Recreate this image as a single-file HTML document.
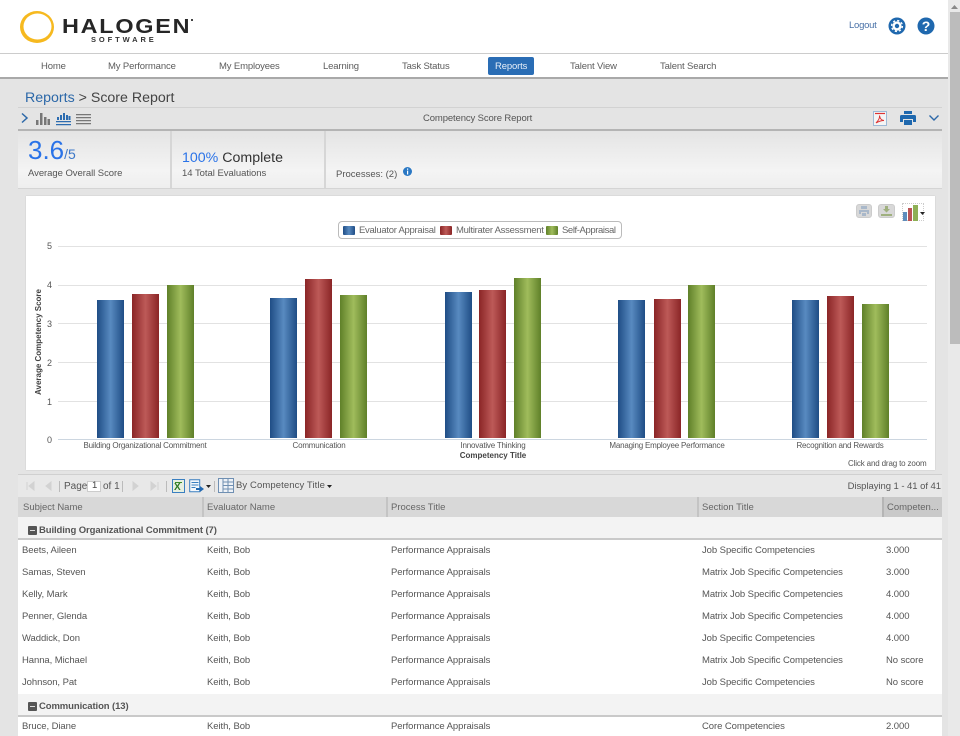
<!DOCTYPE html>
<html><head><meta charset="utf-8"><title>Score Report</title>
<style>
html,body{margin:0;padding:0;width:960px;height:736px;overflow:hidden;background:#e4e4e4}
body{font-family:"Liberation Sans",sans-serif;font-size:9.5px;color:#555;position:relative}
#w{position:absolute;left:0;top:0;width:960px;height:736px;overflow:hidden;filter:blur(.35px)}
.a,.t{position:absolute}
.t{white-space:nowrap;line-height:12px}
.bar{position:absolute;width:27px;box-sizing:border-box}
.b{background:linear-gradient(90deg,#1f4d85,#588ac0 50%,#1f4d85)}
.r{background:linear-gradient(90deg,#8a2526,#bd5a58 50%,#8a2526)}
.g{background:linear-gradient(90deg,#5f8029,#a0bc5c 50%,#5f8029)}
.gl{position:absolute;left:58px;width:869px;height:1px;background:#e2e2e2}
.n{color:#5c5c5c;font-size:9.5px;top:61px;letter-spacing:-.14px}
.h{top:502px;font-size:9.5px;color:#666;letter-spacing:0}
.c{font-size:9.5px;color:#555;letter-spacing:-.07px}
.yl{left:47px;font-size:9px;color:#555}
.xl{font-size:8px;color:#555;top:440px;text-align:center;letter-spacing:-.2px}
.row{position:absolute;left:18px;width:924px;height:22px;background:#fff}
.grp{position:absolute;left:18px;width:924px;height:21px;background:#f3f3f3;border-bottom:2px solid #c9c9c9}
.mn{position:absolute;left:28px;width:9px;height:9px;background:#555;border-radius:1px}
.mn:after{content:"";position:absolute;left:2px;top:4px;width:5px;height:1px;background:#ddd}
.gt{left:39px;font-size:9.5px;font-weight:bold;color:#555;letter-spacing:-.1px}
.sep{position:absolute;width:1px;background:#bbb}
.lg{top:225px;font-size:9.5px;color:#666;letter-spacing:-.28px}
</style></head><body><div id="w">
<div class="a" style="left:0;top:0;width:948px;height:53px;background:#fff"></div>
<div class="a" style="left:0;top:53px;width:948px;height:1px;background:#ccc"></div>
<div class="a" style="left:0;top:54px;width:948px;height:23px;background:#fff"></div>
<div class="a" style="left:0;top:77px;width:948px;height:2px;background:#a9a9a9"></div>

<svg class="a" style="left:18px;top:8px" width="40" height="38" viewBox="0 0 40 38"><path fill-rule="evenodd" fill="#f6b91f" d="M2 19a17 16 0 1 0 34 0a17 16 0 1 0-34 0zM5.500 18.500a14 13 0 1 1 28 0a14 13 0 1 1-28 0z"/></svg>
<div class="t" style="left:62px;top:15px;font-size:20px;line-height:24px;font-weight:bold;color:#262626;letter-spacing:1.5px;transform:scaleX(1.17);transform-origin:0 0">HALOGEN</div>
<div class="a" style="left:191px;top:19px;width:2px;height:2px;background:#444"></div>
<div class="t" style="left:91px;top:35px;font-size:7.5px;line-height:9px;font-weight:bold;color:#333;letter-spacing:2.9px">SOFTWARE</div>

<div class="t" style="left:849px;top:20px;color:#4a72a8;font-size:9.5px;letter-spacing:-.25px">Logout</div>
<svg class="a" style="left:888px;top:17px" width="18" height="18" viewBox="0 0 18 18"><circle cx="9" cy="9" r="8.5" fill="#1f68ae"/><circle cx="9" cy="9" r="4.600" fill="#fff"/><circle cx="9" cy="9" r="5.400" fill="none" stroke="#fff" stroke-width="1.400" stroke-dasharray="2.200 2.040"/><circle cx="9" cy="9" r="2.200" fill="#1f68ae"/></svg>
<svg class="a" style="left:917px;top:17px" width="18" height="18" viewBox="0 0 18 18"><circle cx="9" cy="9" r="8.5" fill="#1f68ae"/><text x="9" y="14" text-anchor="middle" font-family="Liberation Sans" font-size="14" font-weight="bold" fill="#fff">?</text></svg>

<div class="t n" style="left:41px">Home</div>
<div class="t n" style="left:108px">My Performance</div>
<div class="t n" style="left:219px">My Employees</div>
<div class="t n" style="left:323px">Learning</div>
<div class="t n" style="left:402px">Task Status</div>
<div class="a" style="left:488px;top:57px;width:46px;height:18px;background:#2a6db5;border-radius:2px"></div>
<div class="t n" style="left:495px;color:#e6eef8">Reports</div>
<div class="t n" style="left:570px">Talent View</div>
<div class="t n" style="left:660px">Talent Search</div>

<div class="t" style="left:25px;top:89px;font-size:14.2px;line-height:18px;color:#444"><span style="color:#2c68a8">Reports</span> &gt; Score Report</div>

<div class="a" style="left:18px;top:107px;width:924px;height:1px;background:#d2d2d2"></div>
<div class="a" style="left:18px;top:108px;width:924px;height:21px;background:#e4e4e4"></div>
<div class="a" style="left:18px;top:129px;width:924px;height:2px;background:#b4b4b4"></div>
<svg class="a" style="left:20px;top:112px" width="10" height="12" viewBox="0 0 10 12"><path d="M2 1.5 L7 6 L2 10.5" fill="none" stroke="#2c68a8" stroke-width="1.5"/></svg>
<svg class="a" style="left:36px;top:112px" width="15" height="14" viewBox="0 0 15 14"><path d="M0 13V8h2.5v5zM4 13V1h2.5v12zM8 13V5h2.5v8zM11.5 13V7H14v6z" fill="#777"/></svg>
<svg class="a" style="left:56px;top:112px" width="15" height="14" viewBox="0 0 15 14"><path d="M1 8V5h2v3zM4 8V3h2v5zM7 8V1h2v7zM10 8V3h2v5zM12.5 8V4h2v4zM0 9h15v1.2H0zM0 12h15v1.2H0z" fill="#2c6cb0"/></svg>
<svg class="a" style="left:76px;top:113px" width="15" height="13" viewBox="0 0 15 13"><path d="M0 1h15v1.2H0zM0 4h15v1.2H0zM0 7h15v1.2H0zM0 10h15v1.2H0z" fill="#777"/></svg>
<div class="t" style="left:423px;top:113px;font-size:9.5px;color:#555;letter-spacing:-.12px">Competency Score Report</div>
<div class="a" style="left:873px;top:111px;width:12px;height:13px;border:1px solid #9db9d6;background:#f4f4f4"></div>
<svg class="a" style="left:874px;top:112px" width="12" height="13" viewBox="0 0 12 13"><path d="M1 1.5h10" stroke="#d33" stroke-width="1.2"/><path d="M2 11 C5 8 6 6 5.5 3.5 C6 7 8 8.5 10 8.5 C7.5 8.5 4.5 9.5 2 11Z" fill="none" stroke="#d33" stroke-width="1"/></svg>
<svg class="a" style="left:900px;top:111px" width="16" height="14" viewBox="0 0 16 14"><path d="M4 0h8v3H4zM1.5 4h13a1.5 1.5 0 0 1 1.5 1.5V11h-3V8H3v3H0V5.500A1.500 1.500 0 0 1 1.500 4zM4 9h8v5H4z" fill="#1f68ae"/></svg>
<svg class="a" style="left:928px;top:114px" width="12" height="8" viewBox="0 0 12 8"><path d="M1.500 1.500L6 6l4.500-4.500" fill="none" stroke="#2c68a8" stroke-width="1.400"/></svg>

<div class="a" style="left:18px;top:131px;width:924px;height:57px;background:linear-gradient(#e4e4e4,#f4f4f4 70%,#eee);border-bottom:1px solid #d4d4d4"></div>
<div class="a" style="left:170px;top:131px;width:2px;height:57px;background:#d6d6d6"></div>
<div class="a" style="left:324px;top:131px;width:2px;height:57px;background:#d6d6d6"></div>
<div class="t" style="left:28px;top:135px;font-size:26px;line-height:30px;color:#2a73e8">3.6<span style="font-size:14px;color:#3d78c8">/5</span></div>
<div class="t" style="left:28px;top:168px;font-size:9.5px;color:#555;letter-spacing:-.05px">Average Overall Score</div>
<div class="t" style="left:182px;top:150px;font-size:14.2px;line-height:17px;color:#333"><span style="color:#2a73e8">100%</span> Complete</div>
<div class="t" style="left:182px;top:168px;font-size:9.5px;color:#555;letter-spacing:-.03px">14 Total Evaluations</div>
<div class="t" style="left:336px;top:169px;font-size:9.5px;color:#555">Processes: (2)</div>
<svg class="a" style="left:403px;top:167px" width="9" height="9" viewBox="0 0 9 9"><circle cx="4.500" cy="4.500" r="4.500" fill="#2a78c4"/><path d="M4 1.500h1.200v1.200H4zM4 3.600h1.200V7.500H4z" fill="#fff"/></svg>

<div class="a" style="left:26px;top:196px;width:909px;height:274px;background:#fff;box-shadow:0 0 1px #bbb"></div>
<div class="a" style="left:856px;top:204px;width:16px;height:14px;background:#d8d8d8;border:1px solid #ccc;border-radius:3px;box-sizing:border-box"></div>
<svg class="a" style="left:858px;top:205px" width="12" height="12" viewBox="0 0 12 12"><path d="M3 1h6v3H3zM1 5h10v4H9V7H3v2H1zM4 8h4v3H4z" fill="#a9b8ca"/></svg>
<div class="a" style="left:878px;top:204px;width:17px;height:14px;background:#d8d8d8;border:1px solid #ccc;border-radius:3px;box-sizing:border-box"></div>
<svg class="a" style="left:880px;top:205px" width="13" height="12" viewBox="0 0 13 12"><path d="M5 1h3v3h2L6.500 7.500 3 4h2zM1 9h11v2H1z" fill="#9fb07e"/></svg>
<div class="a" style="left:902px;top:203px;width:22px;height:18px;border:1px dotted #ccc;box-sizing:border-box"></div>
<div class="a" style="left:903px;top:212px;width:4px;height:9px;background:#5e8dbc"></div>
<div class="a" style="left:908px;top:208px;width:4px;height:13px;background:#bb5455"></div>
<div class="a" style="left:913px;top:205px;width:5px;height:16px;background:#8eaf55"></div>
<svg class="a" style="left:920px;top:212px" width="5" height="3"><path d="M0 0h5L2.500 3z" fill="#222"/></svg>

<div class="a" style="left:338px;top:221px;width:284px;height:18px;border:1px solid #bbb;border-radius:4px;box-sizing:border-box;background:#fff"></div>
<div class="a b" style="left:343px;top:226px;width:12px;height:9px;border-radius:1px"></div>
<div class="t lg" style="left:359px">Evaluator Appraisal</div>
<div class="a r" style="left:440px;top:226px;width:12px;height:9px;border-radius:1px"></div>
<div class="t lg" style="left:456px">Multirater Assessment</div>
<div class="a g" style="left:546px;top:226px;width:12px;height:9px;border-radius:1px"></div>
<div class="t lg" style="left:562px;letter-spacing:-.4px">Self-Appraisal</div>

<div class="gl" style="top:246px"></div><div class="gl" style="top:285px"></div><div class="gl" style="top:323px"></div><div class="gl" style="top:362px"></div><div class="gl" style="top:401px"></div><div class="gl" style="top:439px;background:#ccd6e0"></div>
<div class="t yl" style="top:240px">5</div><div class="t yl" style="top:279px">4</div><div class="t yl" style="top:318px">3</div><div class="t yl" style="top:357px">2</div><div class="t yl" style="top:396px">1</div><div class="t yl" style="top:434px">0</div>
<div class="t" style="left:-21px;top:336px;width:120px;text-align:center;font-size:8px;font-weight:bold;color:#444;transform:rotate(-90deg)">Average Competency Score</div>

<div class="bar b" style="left:97px;top:300px;height:138px"></div><div class="bar r" style="left:132px;top:294px;height:144px"></div><div class="bar g" style="left:167px;top:285px;height:153px"></div>
<div class="bar b" style="left:270px;top:298px;height:140px"></div><div class="bar r" style="left:305px;top:279px;height:159px"></div><div class="bar g" style="left:340px;top:295px;height:143px"></div>
<div class="bar b" style="left:445px;top:292px;height:146px"></div><div class="bar r" style="left:479px;top:290px;height:148px"></div><div class="bar g" style="left:514px;top:278px;height:160px"></div>
<div class="bar b" style="left:618px;top:300px;height:138px"></div><div class="bar r" style="left:654px;top:299px;height:139px"></div><div class="bar g" style="left:688px;top:285px;height:153px"></div>
<div class="bar b" style="left:792px;top:300px;height:138px"></div><div class="bar r" style="left:827px;top:296px;height:142px"></div><div class="bar g" style="left:862px;top:304px;height:134px"></div>

<div class="t xl" style="left:58px;width:174px">Building Organizational Commitment</div>
<div class="t xl" style="left:232px;width:174px">Communication</div>
<div class="t xl" style="left:406px;width:174px">Innovative Thinking</div>
<div class="t xl" style="left:580px;width:174px">Managing Employee Performance</div>
<div class="t xl" style="left:753px;width:174px">Recognition and Rewards</div>
<div class="t" style="left:406px;top:450px;width:174px;text-align:center;font-size:8px;font-weight:bold;color:#444">Competency Title</div>
<div class="t" style="left:848px;top:458px;font-size:8px;color:#555;letter-spacing:-.15px">Click and drag to zoom</div>

<div class="a" style="left:18px;top:474px;width:924px;height:23px;background:#e8e8e8;border-top:1px solid #d0d0d0;box-sizing:border-box"></div>
<svg class="a" style="left:26px;top:481px" width="34" height="10" viewBox="0 0 34 10"><path d="M1 1v8M8 1L3 5l5 4zM25 1l-5 4 5 4z" fill="#d2d2d2" stroke="#d2d2d2"/></svg>
<div class="sep" style="left:59px;top:481px;height:11px"></div>
<div class="t" style="left:64px;top:481px;font-size:10px;color:#555">Page</div>
<div class="a" style="left:87px;top:481px;width:14px;height:11px;background:#fff;border:1px solid #ccc;box-sizing:border-box"></div>
<div class="t" style="left:92px;top:480px;font-size:9.500px;color:#444">1</div>
<div class="t" style="left:103px;top:481px;font-size:10px;color:#555">of 1</div>
<div class="sep" style="left:122px;top:481px;height:11px"></div>
<svg class="a" style="left:131px;top:481px" width="28" height="10" viewBox="0 0 28 10"><path d="M2 1l5 4-5 4zM20 1l5 4-5 4zM27 1v8" fill="#d2d2d2" stroke="#d2d2d2"/></svg>
<div class="sep" style="left:166px;top:481px;height:11px"></div>
<div class="a" style="left:172px;top:479px;width:13px;height:14px;background:#e6efe0;border:1px solid #3a7fc0;box-sizing:border-box"></div>
<div class="a" style="left:175px;top:482px;width:7px;height:1px;background:#3a8a2a"></div>
<div class="t" style="left:174px;top:482px;font-size:10px;font-weight:bold;color:#2d7a22">X</div>
<svg class="a" style="left:189px;top:479px" width="16" height="14" viewBox="0 0 16 14"><path d="M.7.700h10v12H.7z" fill="#f4f7fb" stroke="#3a7fc0"/><path d="M2.500 3.500h7M2.500 6h7M2.500 8.500h4" stroke="#3a7fc0"/><path d="M7 9h4V7l4 3-4 3v-2H7z" fill="#2268b0"/></svg>
<svg class="a" style="left:206px;top:485px" width="5" height="3"><path d="M0 0h5L2.500 3z" fill="#222"/></svg>
<div class="sep" style="left:214px;top:481px;height:11px"></div>
<svg class="a" style="left:218px;top:478px" width="16" height="15" viewBox="0 0 16 15"><path d="M.5.500h15v14H.5z" fill="#eef2f7" stroke="#6f8fb2"/><path d="M5 .500v14M10 .500v14M5 4h10M5 7.500h10M5 11h10" stroke="#6f8fb2" fill="none"/></svg>
<div class="t" style="left:236px;top:480px;font-size:9.5px;color:#555;letter-spacing:.1px">By Competency Title</div>
<svg class="a" style="left:327px;top:485px" width="5" height="3"><path d="M0 0h5L2.500 3z" fill="#222"/></svg>
<div class="t" style="right:19px;top:481px;font-size:9.5px;color:#555;letter-spacing:-.05px">Displaying 1 - 41 of 41</div>

<div class="a" style="left:18px;top:497px;width:924px;height:20px;background:#d8d8d8"></div>
<div class="a" style="left:883px;top:497px;width:59px;height:20px;background:#c9c9c9"></div>
<div class="sep" style="left:202px;top:497px;height:20px;width:2px;background:#c4c4c4"></div>
<div class="sep" style="left:386px;top:497px;height:20px;width:2px;background:#c4c4c4"></div>
<div class="sep" style="left:697px;top:497px;height:20px;width:2px;background:#c4c4c4"></div>
<div class="sep" style="left:882px;top:497px;height:20px;width:2px;background:#b5b5b5"></div>
<div class="t h" style="left:23px">Subject Name</div><div class="t h" style="left:207px">Evaluator Name</div><div class="t h" style="left:391px">Process Title</div><div class="t h" style="left:702px">Section Title</div><div class="t h" style="left:887px">Competen...</div>

<div class="grp" style="top:517px"></div><div class="mn" style="top:526px"></div><div class="t gt" style="top:525px">Building Organizational Commitment (7)</div>
<div class="row" style="top:540px;height:154px"></div>

<div class="t c" style="left:22px;top:545px">Beets, Aileen</div><div class="t c" style="left:207px;top:545px">Keith, Bob</div><div class="t c" style="left:391px;top:545px">Performance Appraisals</div><div class="t c" style="left:702px;top:545px">Job Specific Competencies</div><div class="t c" style="left:886px;top:545px">3.000</div>
<div class="t c" style="left:22px;top:567px">Samas, Steven</div><div class="t c" style="left:207px;top:567px">Keith, Bob</div><div class="t c" style="left:391px;top:567px">Performance Appraisals</div><div class="t c" style="left:702px;top:567px">Matrix Job Specific Competencies</div><div class="t c" style="left:886px;top:567px">3.000</div>
<div class="t c" style="left:22px;top:589px">Kelly, Mark</div><div class="t c" style="left:207px;top:589px">Keith, Bob</div><div class="t c" style="left:391px;top:589px">Performance Appraisals</div><div class="t c" style="left:702px;top:589px">Matrix Job Specific Competencies</div><div class="t c" style="left:886px;top:589px">4.000</div>
<div class="t c" style="left:22px;top:611px">Penner, Glenda</div><div class="t c" style="left:207px;top:611px">Keith, Bob</div><div class="t c" style="left:391px;top:611px">Performance Appraisals</div><div class="t c" style="left:702px;top:611px">Matrix Job Specific Competencies</div><div class="t c" style="left:886px;top:611px">4.000</div>
<div class="t c" style="left:22px;top:633px">Waddick, Don</div><div class="t c" style="left:207px;top:633px">Keith, Bob</div><div class="t c" style="left:391px;top:633px">Performance Appraisals</div><div class="t c" style="left:702px;top:633px">Job Specific Competencies</div><div class="t c" style="left:886px;top:633px">4.000</div>
<div class="t c" style="left:22px;top:655px">Hanna, Michael</div><div class="t c" style="left:207px;top:655px">Keith, Bob</div><div class="t c" style="left:391px;top:655px">Performance Appraisals</div><div class="t c" style="left:702px;top:655px">Matrix Job Specific Competencies</div><div class="t c" style="left:886px;top:655px">No score</div>
<div class="t c" style="left:22px;top:677px">Johnson, Pat</div><div class="t c" style="left:207px;top:677px">Keith, Bob</div><div class="t c" style="left:391px;top:677px">Performance Appraisals</div><div class="t c" style="left:702px;top:677px">Job Specific Competencies</div><div class="t c" style="left:886px;top:677px">No score</div>

<div class="grp" style="top:694px"></div><div class="mn" style="top:702px"></div><div class="t gt" style="top:701px">Communication (13)</div>
<div class="row" style="top:717px;height:19px"></div>
<div class="t c" style="left:22px;top:721px">Bruce, Diane</div><div class="t c" style="left:207px;top:721px">Keith, Bob</div><div class="t c" style="left:391px;top:721px">Performance Appraisals</div><div class="t c" style="left:702px;top:721px">Core Competencies</div><div class="t c" style="left:886px;top:721px">2.000</div>

<div class="a" style="left:948px;top:0;width:12px;height:736px;background:#e9e9e9"></div>
<div class="a" style="left:950px;top:12px;width:10px;height:332px;background:#bcbcbc"></div>
<svg class="a" style="left:951px;top:5px" width="7" height="4"><path d="M0 4L3.500 0 7 4z" fill="#888"/></svg>
</div></body></html>
